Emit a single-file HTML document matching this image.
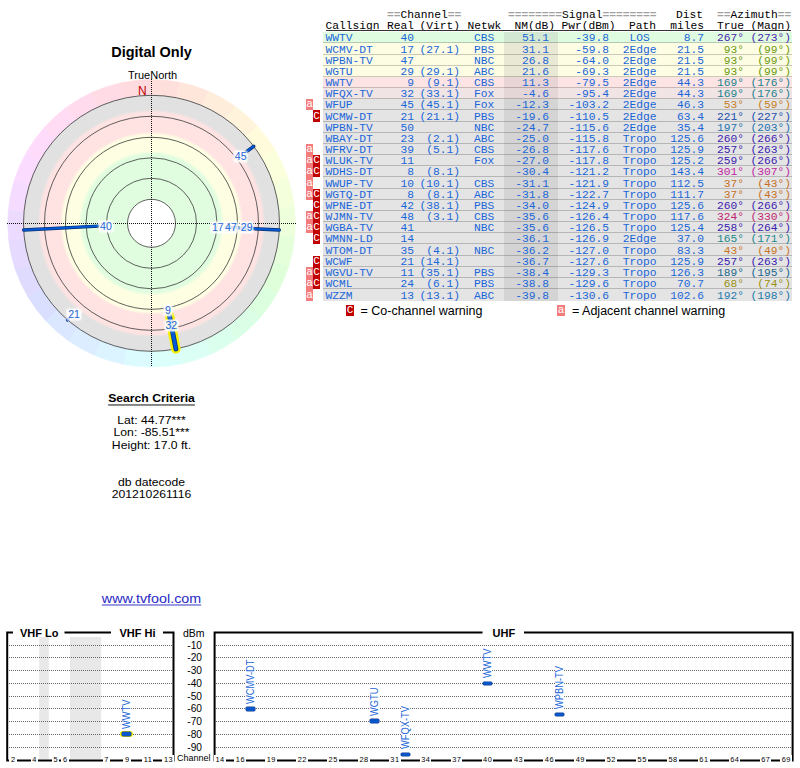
<!DOCTYPE html>
<html><head><meta charset='utf-8'><style>
*{margin:0;padding:0}
html,body{width:800px;height:768px;overflow:hidden;background:#fff}
div{position:absolute;white-space:nowrap}
.title{font:bold 14.5px 'Liberation Sans',sans-serif;text-align:center;color:#000}
.tn{font:11px 'Liberation Sans',sans-serif;color:#000}
.nn{font:12px 'Liberation Sans',sans-serif;color:#c00000}
.pl{font:10.5px 'Liberation Sans',sans-serif;color:#1a66d8;line-height:11px;padding:0 1px;background:rgba(255,255,255,0.85);border-radius:2px;box-shadow:0 0 1.5px 1px rgba(255,255,255,0.6)}
.mono{font-family:'Liberation Mono',monospace;font-size:11.25px;line-height:12px}
.hdr{color:#000}
.hdr .g{color:#a0a0a0;font-weight:bold}
.row{left:323px;width:469px;box-shadow:inset 0 -1px 0 rgba(0,0,0,0.2)}
.nmbg{left:181px;top:0;width:54px;height:100%;box-shadow:inset 0 -1px 0 rgba(0,0,0,0.2)}
.cell{color:#1a66d8}
.ba,.bc{font:11px 'Liberation Mono',monospace;color:#fff;text-align:center;line-height:11px;width:7px;height:11.18px;top:0}
.ba{left:306px;background:#f47c7c}
.bc{left:313px;background:#c00000}
.leg{font:12.5px 'Liberation Sans',sans-serif;color:#000}
.sc{left:0;width:303px;text-align:center;font:12.2px 'Liberation Sans',sans-serif;color:#000;transform:scaleY(0.93);text-underline-offset:2.5px}
.link{font:14.3px 'Liberation Sans',sans-serif;color:#2828c4;text-decoration:underline;text-align:center;transform:scaleY(0.93);text-underline-offset:1.5px}
.band{font:bold 11px 'Liberation Sans',sans-serif;color:#000;line-height:13px}
.dbm{font:10.5px 'Liberation Sans',sans-serif;color:#000;line-height:12px}
.dbl{left:170px;width:32px;text-align:right;font:10.2px 'Liberation Sans',sans-serif;color:#000;line-height:12px}
.chn{font:9px 'Liberation Sans',sans-serif;color:#000;line-height:12px}
.ch{width:30px;text-align:center;font:7.4px 'Liberation Sans',sans-serif;color:#000;line-height:12px;letter-spacing:0.5px}
.ch span{background:#fff;padding:0 1px 0 1.5px}
.vn{font:9.3px 'Liberation Sans',sans-serif;color:#1a66d8;background:#fff;padding:0 1px;transform-origin:0 0;transform:rotate(-90deg) scaleY(1.15);line-height:8px}
</style></head><body>
<svg style="position:absolute;left:0;top:0" width="310" height="380" viewBox="0 0 310 380">
<defs><radialGradient id="rg" cx="151.5" cy="223.3" r="128" gradientUnits="userSpaceOnUse">
<stop offset="0.0000" stop-color="#ffffff"/>
<stop offset="0.1867" stop-color="#ffffff"/>
<stop offset="0.1875" stop-color="#e0fde0"/>
<stop offset="0.5391" stop-color="#e0fde0"/>
<stop offset="0.5664" stop-color="#fefee2"/>
<stop offset="0.6914" stop-color="#fefee2"/>
<stop offset="0.7148" stop-color="#ffe3e3"/>
<stop offset="0.8633" stop-color="#ffe3e3"/>
<stop offset="0.8906" stop-color="#e1e1e1"/>
<stop offset="1.0000" stop-color="#e1e1e1"/>
</radialGradient></defs>
<path d="M149.99,79.51 A143.8,143.8 0 0 1 179.92,82.34 L176.70,98.32 A127.5,127.5 0 0 0 150.16,95.81Z" fill="hsl(6,100%,93%)" stroke="hsl(6,100%,93%)" stroke-width="0.6"/>
<path d="M179.92,82.34 A143.8,143.8 0 0 1 208.61,91.33 L202.14,106.29 A127.5,127.5 0 0 0 176.70,98.32Z" fill="hsl(18,100%,93%)" stroke="hsl(18,100%,93%)" stroke-width="0.6"/>
<path d="M208.61,91.33 A143.8,143.8 0 0 1 234.80,106.08 L225.36,119.37 A127.5,127.5 0 0 0 202.14,106.29Z" fill="hsl(30,100%,93%)" stroke="hsl(30,100%,93%)" stroke-width="0.6"/>
<path d="M234.80,106.08 A143.8,143.8 0 0 1 257.35,125.97 L245.35,137.00 A127.5,127.5 0 0 0 225.36,119.37Z" fill="hsl(42,100%,93%)" stroke="hsl(42,100%,93%)" stroke-width="0.6"/>
<path d="M257.35,125.97 A143.8,143.8 0 0 1 275.27,150.10 L261.24,158.40 A127.5,127.5 0 0 0 245.35,137.00Z" fill="hsl(54,100%,93%)" stroke="hsl(54,100%,93%)" stroke-width="0.6"/>
<path d="M275.27,150.10 A143.8,143.8 0 0 1 287.79,177.43 L272.34,182.63 A127.5,127.5 0 0 0 261.24,158.40Z" fill="hsl(66,100%,93%)" stroke="hsl(66,100%,93%)" stroke-width="0.6"/>
<path d="M287.79,177.43 A143.8,143.8 0 0 1 294.35,206.77 L278.16,208.65 A127.5,127.5 0 0 0 272.34,182.63Z" fill="hsl(78,100%,93%)" stroke="hsl(78,100%,93%)" stroke-width="0.6"/>
<path d="M294.35,206.77 A143.8,143.8 0 0 1 294.66,236.83 L278.43,235.30 A127.5,127.5 0 0 0 278.16,208.65Z" fill="hsl(90,100%,93%)" stroke="hsl(90,100%,93%)" stroke-width="0.6"/>
<path d="M294.66,236.83 A143.8,143.8 0 0 1 288.72,266.30 L273.17,261.43 A127.5,127.5 0 0 0 278.43,235.30Z" fill="hsl(102,100%,93%)" stroke="hsl(102,100%,93%)" stroke-width="0.6"/>
<path d="M288.72,266.30 A143.8,143.8 0 0 1 276.78,293.89 L262.58,285.89 A127.5,127.5 0 0 0 273.17,261.43Z" fill="hsl(114,100%,93%)" stroke="hsl(114,100%,93%)" stroke-width="0.6"/>
<path d="M276.78,293.89 A143.8,143.8 0 0 1 259.37,318.40 L247.14,307.62 A127.5,127.5 0 0 0 262.58,285.89Z" fill="hsl(126,100%,93%)" stroke="hsl(126,100%,93%)" stroke-width="0.6"/>
<path d="M259.37,318.40 A143.8,143.8 0 0 1 237.24,338.75 L227.52,325.66 A127.5,127.5 0 0 0 247.14,307.62Z" fill="hsl(138,100%,93%)" stroke="hsl(138,100%,93%)" stroke-width="0.6"/>
<path d="M237.24,338.75 A143.8,143.8 0 0 1 211.36,354.05 L204.58,339.23 A127.5,127.5 0 0 0 227.52,325.66Z" fill="hsl(150,100%,93%)" stroke="hsl(150,100%,93%)" stroke-width="0.6"/>
<path d="M211.36,354.05 A143.8,143.8 0 0 1 182.87,363.64 L179.31,347.73 A127.5,127.5 0 0 0 204.58,339.23Z" fill="hsl(162,100%,93%)" stroke="hsl(162,100%,93%)" stroke-width="0.6"/>
<path d="M182.87,363.64 A143.8,143.8 0 0 1 153.01,367.09 L152.84,350.79 A127.5,127.5 0 0 0 179.31,347.73Z" fill="hsl(174,100%,93%)" stroke="hsl(174,100%,93%)" stroke-width="0.6"/>
<path d="M153.01,367.09 A143.8,143.8 0 0 1 123.08,364.26 L126.30,348.28 A127.5,127.5 0 0 0 152.84,350.79Z" fill="hsl(186,100%,93%)" stroke="hsl(186,100%,93%)" stroke-width="0.6"/>
<path d="M123.08,364.26 A143.8,143.8 0 0 1 94.39,355.27 L100.86,340.31 A127.5,127.5 0 0 0 126.30,348.28Z" fill="hsl(198,100%,93%)" stroke="hsl(198,100%,93%)" stroke-width="0.6"/>
<path d="M94.39,355.27 A143.8,143.8 0 0 1 68.20,340.52 L77.64,327.23 A127.5,127.5 0 0 0 100.86,340.31Z" fill="hsl(210,100%,93%)" stroke="hsl(210,100%,93%)" stroke-width="0.6"/>
<path d="M68.20,340.52 A143.8,143.8 0 0 1 45.65,320.63 L57.65,309.60 A127.5,127.5 0 0 0 77.64,327.23Z" fill="hsl(222,100%,93%)" stroke="hsl(222,100%,93%)" stroke-width="0.6"/>
<path d="M45.65,320.63 A143.8,143.8 0 0 1 27.73,296.50 L41.76,288.20 A127.5,127.5 0 0 0 57.65,309.60Z" fill="hsl(234,100%,93%)" stroke="hsl(234,100%,93%)" stroke-width="0.6"/>
<path d="M27.73,296.50 A143.8,143.8 0 0 1 15.21,269.17 L30.66,263.97 A127.5,127.5 0 0 0 41.76,288.20Z" fill="hsl(246,100%,93%)" stroke="hsl(246,100%,93%)" stroke-width="0.6"/>
<path d="M15.21,269.17 A143.8,143.8 0 0 1 8.65,239.83 L24.84,237.95 A127.5,127.5 0 0 0 30.66,263.97Z" fill="hsl(258,100%,93%)" stroke="hsl(258,100%,93%)" stroke-width="0.6"/>
<path d="M8.65,239.83 A143.8,143.8 0 0 1 8.34,209.77 L24.57,211.30 A127.5,127.5 0 0 0 24.84,237.95Z" fill="hsl(270,100%,93%)" stroke="hsl(270,100%,93%)" stroke-width="0.6"/>
<path d="M8.34,209.77 A143.8,143.8 0 0 1 14.28,180.30 L29.83,185.17 A127.5,127.5 0 0 0 24.57,211.30Z" fill="hsl(282,100%,93%)" stroke="hsl(282,100%,93%)" stroke-width="0.6"/>
<path d="M14.28,180.30 A143.8,143.8 0 0 1 26.22,152.71 L40.42,160.71 A127.5,127.5 0 0 0 29.83,185.17Z" fill="hsl(294,100%,93%)" stroke="hsl(294,100%,93%)" stroke-width="0.6"/>
<path d="M26.22,152.71 A143.8,143.8 0 0 1 43.63,128.20 L55.86,138.98 A127.5,127.5 0 0 0 40.42,160.71Z" fill="hsl(306,100%,93%)" stroke="hsl(306,100%,93%)" stroke-width="0.6"/>
<path d="M43.63,128.20 A143.8,143.8 0 0 1 65.76,107.85 L75.48,120.94 A127.5,127.5 0 0 0 55.86,138.98Z" fill="hsl(318,100%,93%)" stroke="hsl(318,100%,93%)" stroke-width="0.6"/>
<path d="M65.76,107.85 A143.8,143.8 0 0 1 91.64,92.55 L98.42,107.37 A127.5,127.5 0 0 0 75.48,120.94Z" fill="hsl(330,100%,93%)" stroke="hsl(330,100%,93%)" stroke-width="0.6"/>
<path d="M91.64,92.55 A143.8,143.8 0 0 1 120.13,82.96 L123.69,98.87 A127.5,127.5 0 0 0 98.42,107.37Z" fill="hsl(342,100%,93%)" stroke="hsl(342,100%,93%)" stroke-width="0.6"/>
<path d="M120.13,82.96 A143.8,143.8 0 0 1 149.99,79.51 L150.16,95.81 A127.5,127.5 0 0 0 123.69,98.87Z" fill="hsl(354,100%,93%)" stroke="hsl(354,100%,93%)" stroke-width="0.6"/>
<circle cx="151.5" cy="223.3" r="128" fill="url(#rg)"/>
<circle cx="151.5" cy="223.3" r="24" fill="none" stroke="#3a3a3a" stroke-width="0.8"/>
<circle cx="151.5" cy="223.3" r="45" fill="none" stroke="#3a3a3a" stroke-width="0.8"/>
<circle cx="151.5" cy="223.3" r="65.5" fill="none" stroke="#3a3a3a" stroke-width="0.8"/>
<circle cx="151.5" cy="223.3" r="86" fill="none" stroke="#3a3a3a" stroke-width="0.8"/>
<circle cx="151.5" cy="223.3" r="107" fill="none" stroke="#3a3a3a" stroke-width="0.8"/>
<circle cx="151.5" cy="223.3" r="128" fill="none" stroke="#3a3a3a" stroke-width="0.8"/>
<line x1="7" y1="223.5" x2="296" y2="223.5" stroke="#111" stroke-width="1" stroke-dasharray="1,1"/>
<line x1="151.5" y1="79" x2="151.5" y2="367" stroke="#111" stroke-width="1" stroke-dasharray="1,1"/>
<line x1="98.52" y1="226.08" x2="23.68" y2="230.00" stroke="#0a3070" stroke-width="3.4" stroke-linecap="round"/>
<line x1="98.52" y1="226.08" x2="23.68" y2="230.00" stroke="#0058d8" stroke-width="2.0" stroke-linecap="round"/>
<line x1="225.25" y1="227.17" x2="279.32" y2="230.00" stroke="#0a3070" stroke-width="3.4" stroke-linecap="round"/>
<line x1="225.25" y1="227.17" x2="279.32" y2="230.00" stroke="#0058d8" stroke-width="2.0" stroke-linecap="round"/>
<line x1="246.53" y1="151.69" x2="253.73" y2="146.27" stroke="#0a3070" stroke-width="3.4" stroke-linecap="round"/>
<line x1="246.53" y1="151.69" x2="253.73" y2="146.27" stroke="#0058d8" stroke-width="2.0" stroke-linecap="round"/>
<line x1="68.45" y1="318.83" x2="67.52" y2="319.90" stroke="#0a3070" stroke-width="3.4" stroke-linecap="round"/>
<line x1="68.45" y1="318.83" x2="67.52" y2="319.90" stroke="#0058d8" stroke-width="2.0" stroke-linecap="round"/>
<line x1="169.52" y1="316.01" x2="175.92" y2="348.95" stroke="#f4f000" stroke-width="9.5" stroke-linecap="round"/>
<line x1="169.52" y1="316.01" x2="175.92" y2="348.95" stroke="#0a3070" stroke-width="4.8" stroke-linecap="round"/>
<line x1="169.52" y1="316.01" x2="175.92" y2="348.95" stroke="#0058d8" stroke-width="3.4" stroke-linecap="round"/>
</svg>
<div class="pl" style="left:99.1px;top:221.0px">40</div>
<div class="pl" style="left:211.0px;top:222.2px">17</div>
<div class="pl" style="left:224.1px;top:222.2px">47</div>
<div class="pl" style="left:239.8px;top:222.2px">29</div>
<div class="pl" style="left:233.8px;top:151.3px">45</div>
<div class="pl" style="left:164.0px;top:304.5px">9</div>
<div class="pl" style="left:164.5px;top:319.9px">32</div>
<div class="pl" style="left:67.2px;top:308.8px">21</div>
<div class="title" style="left:0;top:43.5px;width:303px">Digital Only</div>
<div class="tn" style="left:128px;top:68.5px">TrueNorth</div>
<div class="nn" style="left:138px;top:84px">N</div>
<div class="mono hdr" style="left:387px;top:9.2px"><span class="g">==</span>Channel<span class="g">==</span></div>
<div class="mono hdr" style="left:508px;top:9.2px"><span class="g">========</span>Signal<span class="g">========</span></div>
<div class="mono hdr r" style="right:97px;top:9.2px">Dist</div>
<div class="mono hdr" style="left:717px;top:9.2px"><span class="g">==</span>Azimuth<span class="g">==</span></div>
<div class="mono hdr" style="left:325.5px;top:20px">Callsign</div>
<div class="mono hdr" style="right:386.0px;top:20px">Real</div>
<div class="mono hdr" style="right:340.0px;top:20px">(Virt)</div>
<div class="mono hdr" style="left:467.5px;top:20px">Netwk</div>
<div class="mono hdr" style="right:245.0px;top:20px">NM(dB)</div>
<div class="mono hdr" style="right:184.5px;top:20px">Pwr(dBm)</div>
<div class="mono hdr" style="right:144.0px;top:20px">Path</div>
<div class="mono hdr" style="right:96.0px;top:20px">miles</div>
<div class="mono hdr" style="right:56.0px;top:20px">True</div>
<div class="mono hdr" style="right:9.0px;top:20px">(Magn)</div>
<div style="position:absolute;left:326px;top:30px;width:465px;height:1px;background:#333"></div>
<div class="row" style="top:32px;height:11px;background:#e0fce0"><div class="nmbg" style="background:#d2e8d2"></div></div>
<div class="mono cell" style="top:32.00px;left:325.5px">WWTV</div>
<div class="mono cell" style="top:32.00px;right:386.0px">40</div>
<div class="mono cell" style="top:32.00px;left:474.0px">CBS</div>
<div class="mono cell" style="top:32.00px;right:251.0px">51.1</div>
<div class="mono cell" style="top:32.00px;right:191.0px">-39.8</div>
<div class="mono cell" style="top:32.00px;left:599.6px;width:80px;text-align:center">LOS</div>
<div class="mono cell" style="top:32.00px;right:96.0px">8.7</div>
<div class="mono cell" style="top:32.00px;color:hsl(258,72%,40%);right:56.0px">267&deg;</div>
<div class="mono cell" style="top:32.00px;color:hsl(258,72%,40%);right:9.0px">(273&deg;)</div>
<div class="row" style="top:43px;height:12px;background:#fdfde4"><div class="nmbg" style="background:#e8e8d4"></div></div>
<div class="mono cell" style="top:44.00px;left:325.5px">WCMV-DT</div>
<div class="mono cell" style="top:44.00px;right:386.0px">17</div>
<div class="mono cell" style="top:44.00px;right:340.0px">(27.1)</div>
<div class="mono cell" style="top:44.00px;left:474.0px">PBS</div>
<div class="mono cell" style="top:44.00px;right:251.0px">31.1</div>
<div class="mono cell" style="top:44.00px;right:191.0px">-59.8</div>
<div class="mono cell" style="top:44.00px;left:599.6px;width:80px;text-align:center">2Edge</div>
<div class="mono cell" style="top:44.00px;right:96.0px">21.5</div>
<div class="mono cell" style="top:44.00px;color:hsl(80,82%,33%);right:56.0px">93&deg;</div>
<div class="mono cell" style="top:44.00px;color:hsl(80,82%,33%);right:9.0px">(99&deg;)</div>
<div class="row" style="top:55px;height:11px;background:#fdfde4"><div class="nmbg" style="background:#e8e8d4"></div></div>
<div class="mono cell" style="top:55.00px;left:325.5px">WPBN-TV</div>
<div class="mono cell" style="top:55.00px;right:386.0px">47</div>
<div class="mono cell" style="top:55.00px;left:474.0px">NBC</div>
<div class="mono cell" style="top:55.00px;right:251.0px">26.8</div>
<div class="mono cell" style="top:55.00px;right:191.0px">-64.0</div>
<div class="mono cell" style="top:55.00px;left:599.6px;width:80px;text-align:center">2Edge</div>
<div class="mono cell" style="top:55.00px;right:96.0px">21.5</div>
<div class="mono cell" style="top:55.00px;color:hsl(80,82%,33%);right:56.0px">93&deg;</div>
<div class="mono cell" style="top:55.00px;color:hsl(80,82%,33%);right:9.0px">(99&deg;)</div>
<div class="row" style="top:66px;height:11px;background:#fdfde4"><div class="nmbg" style="background:#e8e8d4"></div></div>
<div class="mono cell" style="top:66.00px;left:325.5px">WGTU</div>
<div class="mono cell" style="top:66.00px;right:386.0px">29</div>
<div class="mono cell" style="top:66.00px;right:340.0px">(29.1)</div>
<div class="mono cell" style="top:66.00px;left:474.0px">ABC</div>
<div class="mono cell" style="top:66.00px;right:251.0px">21.6</div>
<div class="mono cell" style="top:66.00px;right:191.0px">-69.3</div>
<div class="mono cell" style="top:66.00px;left:599.6px;width:80px;text-align:center">2Edge</div>
<div class="mono cell" style="top:66.00px;right:96.0px">21.5</div>
<div class="mono cell" style="top:66.00px;color:hsl(80,82%,33%);right:56.0px">93&deg;</div>
<div class="mono cell" style="top:66.00px;color:hsl(80,82%,33%);right:9.0px">(99&deg;)</div>
<div class="row" style="top:77px;height:11px;background:#fce4e4"><div class="nmbg" style="background:#e8d4d4"></div></div>
<div class="mono cell" style="top:77.00px;left:325.5px">WWTV</div>
<div class="mono cell" style="top:77.00px;right:386.0px">9</div>
<div class="mono cell" style="top:77.00px;right:340.0px">(9.1)</div>
<div class="mono cell" style="top:77.00px;left:474.0px">CBS</div>
<div class="mono cell" style="top:77.00px;right:251.0px">11.3</div>
<div class="mono cell" style="top:77.00px;right:191.0px">-79.5</div>
<div class="mono cell" style="top:77.00px;left:599.6px;width:80px;text-align:center">2Edge</div>
<div class="mono cell" style="top:77.00px;right:96.0px">44.3</div>
<div class="mono cell" style="top:77.00px;color:hsl(186,68%,33%);right:56.0px">169&deg;</div>
<div class="mono cell" style="top:77.00px;color:hsl(186,68%,33%);right:9.0px">(176&deg;)</div>
<div class="row" style="top:88px;height:11px;background:#f0e4e4"><div class="nmbg" style="background:#e4d6d6"></div></div>
<div class="mono cell" style="top:88.00px;left:325.5px">WFQX-TV</div>
<div class="mono cell" style="top:88.00px;right:386.0px">32</div>
<div class="mono cell" style="top:88.00px;right:340.0px">(33.1)</div>
<div class="mono cell" style="top:88.00px;left:474.0px">Fox</div>
<div class="mono cell" style="top:88.00px;right:251.0px">-4.6</div>
<div class="mono cell" style="top:88.00px;right:191.0px">-95.4</div>
<div class="mono cell" style="top:88.00px;left:599.6px;width:80px;text-align:center">2Edge</div>
<div class="mono cell" style="top:88.00px;right:96.0px">44.3</div>
<div class="mono cell" style="top:88.00px;color:hsl(186,68%,33%);right:56.0px">169&deg;</div>
<div class="mono cell" style="top:88.00px;color:hsl(186,68%,33%);right:9.0px">(176&deg;)</div>
<div class="row" style="top:99px;height:11px;background:#e4e4e4"><div class="nmbg" style="background:#d4d4d4"></div></div>
<div class="ba" style="top:99px;height:11px;line-height:11px">a</div>
<div class="mono cell" style="top:99.00px;left:325.5px">WFUP</div>
<div class="mono cell" style="top:99.00px;right:386.0px">45</div>
<div class="mono cell" style="top:99.00px;right:340.0px">(45.1)</div>
<div class="mono cell" style="top:99.00px;left:474.0px">Fox</div>
<div class="mono cell" style="top:99.00px;right:251.0px">-12.3</div>
<div class="mono cell" style="top:99.00px;right:191.0px">-103.2</div>
<div class="mono cell" style="top:99.00px;left:599.6px;width:80px;text-align:center">2Edge</div>
<div class="mono cell" style="top:99.00px;right:96.0px">46.3</div>
<div class="mono cell" style="top:99.00px;color:hsl(34,70%,46%);right:56.0px">53&deg;</div>
<div class="mono cell" style="top:99.00px;color:hsl(34,70%,46%);right:9.0px">(59&deg;)</div>
<div class="row" style="top:110px;height:12px;background:#e4e4e4"><div class="nmbg" style="background:#d4d4d4"></div></div>
<div class="bc" style="top:110px;height:12px;line-height:12px">C</div>
<div class="mono cell" style="top:111.00px;left:325.5px">WCMW-DT</div>
<div class="mono cell" style="top:111.00px;right:386.0px">21</div>
<div class="mono cell" style="top:111.00px;right:340.0px">(21.1)</div>
<div class="mono cell" style="top:111.00px;left:474.0px">PBS</div>
<div class="mono cell" style="top:111.00px;right:251.0px">-19.6</div>
<div class="mono cell" style="top:111.00px;right:191.0px">-110.5</div>
<div class="mono cell" style="top:111.00px;left:599.6px;width:80px;text-align:center">2Edge</div>
<div class="mono cell" style="top:111.00px;right:96.0px">63.4</div>
<div class="mono cell" style="top:111.00px;color:hsl(220,72%,40%);right:56.0px">221&deg;</div>
<div class="mono cell" style="top:111.00px;color:hsl(220,72%,40%);right:9.0px">(227&deg;)</div>
<div class="row" style="top:122px;height:11px;background:#e4e4e4"><div class="nmbg" style="background:#d4d4d4"></div></div>
<div class="mono cell" style="top:122.00px;left:325.5px">WPBN-TV</div>
<div class="mono cell" style="top:122.00px;right:386.0px">50</div>
<div class="mono cell" style="top:122.00px;left:474.0px">NBC</div>
<div class="mono cell" style="top:122.00px;right:251.0px">-24.7</div>
<div class="mono cell" style="top:122.00px;right:191.0px">-115.6</div>
<div class="mono cell" style="top:122.00px;left:599.6px;width:80px;text-align:center">2Edge</div>
<div class="mono cell" style="top:122.00px;right:96.0px">35.4</div>
<div class="mono cell" style="top:122.00px;color:hsl(205,72%,40%);right:56.0px">197&deg;</div>
<div class="mono cell" style="top:122.00px;color:hsl(205,72%,40%);right:9.0px">(203&deg;)</div>
<div class="row" style="top:133px;height:11px;background:#e4e4e4"><div class="nmbg" style="background:#d4d4d4"></div></div>
<div class="mono cell" style="top:133.00px;left:325.5px">WBAY-DT</div>
<div class="mono cell" style="top:133.00px;right:386.0px">23</div>
<div class="mono cell" style="top:133.00px;right:340.0px">(2.1)</div>
<div class="mono cell" style="top:133.00px;left:474.0px">ABC</div>
<div class="mono cell" style="top:133.00px;right:251.0px">-25.0</div>
<div class="mono cell" style="top:133.00px;right:191.0px">-115.8</div>
<div class="mono cell" style="top:133.00px;left:599.6px;width:80px;text-align:center">Tropo</div>
<div class="mono cell" style="top:133.00px;right:96.0px">125.6</div>
<div class="mono cell" style="top:133.00px;color:hsl(254,72%,40%);right:56.0px">260&deg;</div>
<div class="mono cell" style="top:133.00px;color:hsl(254,72%,40%);right:9.0px">(266&deg;)</div>
<div class="row" style="top:144px;height:11px;background:#e4e4e4"><div class="nmbg" style="background:#d4d4d4"></div></div>
<div class="ba" style="top:144px;height:11px;line-height:11px">a</div>
<div class="mono cell" style="top:144.00px;left:325.5px">WFRV-DT</div>
<div class="mono cell" style="top:144.00px;right:386.0px">39</div>
<div class="mono cell" style="top:144.00px;right:340.0px">(5.1)</div>
<div class="mono cell" style="top:144.00px;left:474.0px">CBS</div>
<div class="mono cell" style="top:144.00px;right:251.0px">-26.8</div>
<div class="mono cell" style="top:144.00px;right:191.0px">-117.6</div>
<div class="mono cell" style="top:144.00px;left:599.6px;width:80px;text-align:center">Tropo</div>
<div class="mono cell" style="top:144.00px;right:96.0px">125.9</div>
<div class="mono cell" style="top:144.00px;color:hsl(252,72%,40%);right:56.0px">257&deg;</div>
<div class="mono cell" style="top:144.00px;color:hsl(252,72%,40%);right:9.0px">(263&deg;)</div>
<div class="row" style="top:155px;height:11px;background:#e4e4e4"><div class="nmbg" style="background:#d4d4d4"></div></div>
<div class="ba" style="top:155px;height:11px;line-height:11px">a</div>
<div class="bc" style="top:155px;height:11px;line-height:11px">C</div>
<div class="mono cell" style="top:155.00px;left:325.5px">WLUK-TV</div>
<div class="mono cell" style="top:155.00px;right:386.0px">11</div>
<div class="mono cell" style="top:155.00px;left:474.0px">Fox</div>
<div class="mono cell" style="top:155.00px;right:251.0px">-27.0</div>
<div class="mono cell" style="top:155.00px;right:191.0px">-117.8</div>
<div class="mono cell" style="top:155.00px;left:599.6px;width:80px;text-align:center">Tropo</div>
<div class="mono cell" style="top:155.00px;right:96.0px">125.2</div>
<div class="mono cell" style="top:155.00px;color:hsl(253,72%,40%);right:56.0px">259&deg;</div>
<div class="mono cell" style="top:155.00px;color:hsl(253,72%,40%);right:9.0px">(266&deg;)</div>
<div class="row" style="top:166px;height:11px;background:#e4e4e4"><div class="nmbg" style="background:#d4d4d4"></div></div>
<div class="ba" style="top:166px;height:11px;line-height:11px">a</div>
<div class="bc" style="top:166px;height:11px;line-height:11px">C</div>
<div class="mono cell" style="top:166.00px;left:325.5px">WDHS-DT</div>
<div class="mono cell" style="top:166.00px;right:386.0px">8</div>
<div class="mono cell" style="top:166.00px;right:340.0px">(8.1)</div>
<div class="mono cell" style="top:166.00px;right:251.0px">-30.4</div>
<div class="mono cell" style="top:166.00px;right:191.0px">-121.2</div>
<div class="mono cell" style="top:166.00px;left:599.6px;width:80px;text-align:center">Tropo</div>
<div class="mono cell" style="top:166.00px;right:96.0px">143.4</div>
<div class="mono cell" style="top:166.00px;color:hsl(312,72%,44%);right:56.0px">301&deg;</div>
<div class="mono cell" style="top:166.00px;color:hsl(312,72%,44%);right:9.0px">(307&deg;)</div>
<div class="row" style="top:177px;height:12px;background:#e4e4e4"><div class="nmbg" style="background:#d4d4d4"></div></div>
<div class="ba" style="top:177px;height:12px;line-height:12px">a</div>
<div class="mono cell" style="top:178.00px;left:325.5px">WWUP-TV</div>
<div class="mono cell" style="top:178.00px;right:386.0px">10</div>
<div class="mono cell" style="top:178.00px;right:340.0px">(10.1)</div>
<div class="mono cell" style="top:178.00px;left:474.0px">CBS</div>
<div class="mono cell" style="top:178.00px;right:251.0px">-31.1</div>
<div class="mono cell" style="top:178.00px;right:191.0px">-121.9</div>
<div class="mono cell" style="top:178.00px;left:599.6px;width:80px;text-align:center">Tropo</div>
<div class="mono cell" style="top:178.00px;right:96.0px">112.5</div>
<div class="mono cell" style="top:178.00px;color:hsl(28,70%,46%);right:56.0px">37&deg;</div>
<div class="mono cell" style="top:178.00px;color:hsl(28,70%,46%);right:9.0px">(43&deg;)</div>
<div class="row" style="top:189px;height:11px;background:#e4e4e4"><div class="nmbg" style="background:#d4d4d4"></div></div>
<div class="ba" style="top:189px;height:11px;line-height:11px">a</div>
<div class="bc" style="top:189px;height:11px;line-height:11px">C</div>
<div class="mono cell" style="top:189.00px;left:325.5px">WGTQ-DT</div>
<div class="mono cell" style="top:189.00px;right:386.0px">8</div>
<div class="mono cell" style="top:189.00px;right:340.0px">(8.1)</div>
<div class="mono cell" style="top:189.00px;left:474.0px">ABC</div>
<div class="mono cell" style="top:189.00px;right:251.0px">-31.8</div>
<div class="mono cell" style="top:189.00px;right:191.0px">-122.7</div>
<div class="mono cell" style="top:189.00px;left:599.6px;width:80px;text-align:center">Tropo</div>
<div class="mono cell" style="top:189.00px;right:96.0px">111.7</div>
<div class="mono cell" style="top:189.00px;color:hsl(28,70%,46%);right:56.0px">37&deg;</div>
<div class="mono cell" style="top:189.00px;color:hsl(28,70%,46%);right:9.0px">(43&deg;)</div>
<div class="row" style="top:200px;height:11px;background:#e4e4e4"><div class="nmbg" style="background:#d4d4d4"></div></div>
<div class="bc" style="top:200px;height:11px;line-height:11px">C</div>
<div class="mono cell" style="top:200.00px;left:325.5px">WPNE-DT</div>
<div class="mono cell" style="top:200.00px;right:386.0px">42</div>
<div class="mono cell" style="top:200.00px;right:340.0px">(38.1)</div>
<div class="mono cell" style="top:200.00px;left:474.0px">PBS</div>
<div class="mono cell" style="top:200.00px;right:251.0px">-34.0</div>
<div class="mono cell" style="top:200.00px;right:191.0px">-124.9</div>
<div class="mono cell" style="top:200.00px;left:599.6px;width:80px;text-align:center">Tropo</div>
<div class="mono cell" style="top:200.00px;right:96.0px">125.6</div>
<div class="mono cell" style="top:200.00px;color:hsl(254,72%,40%);right:56.0px">260&deg;</div>
<div class="mono cell" style="top:200.00px;color:hsl(254,72%,40%);right:9.0px">(266&deg;)</div>
<div class="row" style="top:211px;height:11px;background:#e4e4e4"><div class="nmbg" style="background:#d4d4d4"></div></div>
<div class="ba" style="top:211px;height:11px;line-height:11px">a</div>
<div class="bc" style="top:211px;height:11px;line-height:11px">C</div>
<div class="mono cell" style="top:211.00px;left:325.5px">WJMN-TV</div>
<div class="mono cell" style="top:211.00px;right:386.0px">48</div>
<div class="mono cell" style="top:211.00px;right:340.0px">(3.1)</div>
<div class="mono cell" style="top:211.00px;left:474.0px">CBS</div>
<div class="mono cell" style="top:211.00px;right:251.0px">-35.6</div>
<div class="mono cell" style="top:211.00px;right:191.0px">-126.4</div>
<div class="mono cell" style="top:211.00px;left:599.6px;width:80px;text-align:center">Tropo</div>
<div class="mono cell" style="top:211.00px;right:96.0px">117.6</div>
<div class="mono cell" style="top:211.00px;color:hsl(330,72%,44%);right:56.0px">324&deg;</div>
<div class="mono cell" style="top:211.00px;color:hsl(330,72%,44%);right:9.0px">(330&deg;)</div>
<div class="row" style="top:222px;height:11px;background:#e4e4e4"><div class="nmbg" style="background:#d4d4d4"></div></div>
<div class="ba" style="top:222px;height:11px;line-height:11px">a</div>
<div class="bc" style="top:222px;height:11px;line-height:11px">C</div>
<div class="mono cell" style="top:222.00px;left:325.5px">WGBA-TV</div>
<div class="mono cell" style="top:222.00px;right:386.0px">41</div>
<div class="mono cell" style="top:222.00px;left:474.0px">NBC</div>
<div class="mono cell" style="top:222.00px;right:251.0px">-35.6</div>
<div class="mono cell" style="top:222.00px;right:191.0px">-126.5</div>
<div class="mono cell" style="top:222.00px;left:599.6px;width:80px;text-align:center">Tropo</div>
<div class="mono cell" style="top:222.00px;right:96.0px">125.4</div>
<div class="mono cell" style="top:222.00px;color:hsl(253,72%,40%);right:56.0px">258&deg;</div>
<div class="mono cell" style="top:222.00px;color:hsl(253,72%,40%);right:9.0px">(264&deg;)</div>
<div class="row" style="top:233px;height:11px;background:#e4e4e4"><div class="nmbg" style="background:#d4d4d4"></div></div>
<div class="bc" style="top:233px;height:11px;line-height:11px">C</div>
<div class="mono cell" style="top:233.00px;left:325.5px">WMNN-LD</div>
<div class="mono cell" style="top:233.00px;right:386.0px">14</div>
<div class="mono cell" style="top:233.00px;right:251.0px">-36.1</div>
<div class="mono cell" style="top:233.00px;right:191.0px">-126.9</div>
<div class="mono cell" style="top:233.00px;left:599.6px;width:80px;text-align:center">2Edge</div>
<div class="mono cell" style="top:233.00px;right:96.0px">37.0</div>
<div class="mono cell" style="top:233.00px;color:hsl(183,68%,33%);right:56.0px">165&deg;</div>
<div class="mono cell" style="top:233.00px;color:hsl(183,68%,33%);right:9.0px">(171&deg;)</div>
<div class="row" style="top:244px;height:12px;background:#e4e4e4"><div class="nmbg" style="background:#d4d4d4"></div></div>
<div class="mono cell" style="top:245.00px;left:325.5px">WTOM-DT</div>
<div class="mono cell" style="top:245.00px;right:386.0px">35</div>
<div class="mono cell" style="top:245.00px;right:340.0px">(4.1)</div>
<div class="mono cell" style="top:245.00px;left:474.0px">NBC</div>
<div class="mono cell" style="top:245.00px;right:251.0px">-36.2</div>
<div class="mono cell" style="top:245.00px;right:191.0px">-127.0</div>
<div class="mono cell" style="top:245.00px;left:599.6px;width:80px;text-align:center">Tropo</div>
<div class="mono cell" style="top:245.00px;right:96.0px">83.3</div>
<div class="mono cell" style="top:245.00px;color:hsl(30,70%,46%);right:56.0px">43&deg;</div>
<div class="mono cell" style="top:245.00px;color:hsl(30,70%,46%);right:9.0px">(49&deg;)</div>
<div class="row" style="top:256px;height:11px;background:#e4e4e4"><div class="nmbg" style="background:#d4d4d4"></div></div>
<div class="bc" style="top:256px;height:11px;line-height:11px">C</div>
<div class="mono cell" style="top:256.00px;left:325.5px">WCWF</div>
<div class="mono cell" style="top:256.00px;right:386.0px">21</div>
<div class="mono cell" style="top:256.00px;right:340.0px">(14.1)</div>
<div class="mono cell" style="top:256.00px;right:251.0px">-36.7</div>
<div class="mono cell" style="top:256.00px;right:191.0px">-127.6</div>
<div class="mono cell" style="top:256.00px;left:599.6px;width:80px;text-align:center">Tropo</div>
<div class="mono cell" style="top:256.00px;right:96.0px">125.9</div>
<div class="mono cell" style="top:256.00px;color:hsl(252,72%,40%);right:56.0px">257&deg;</div>
<div class="mono cell" style="top:256.00px;color:hsl(252,72%,40%);right:9.0px">(263&deg;)</div>
<div class="row" style="top:267px;height:11px;background:#e4e4e4"><div class="nmbg" style="background:#d4d4d4"></div></div>
<div class="ba" style="top:267px;height:11px;line-height:11px">a</div>
<div class="bc" style="top:267px;height:11px;line-height:11px">C</div>
<div class="mono cell" style="top:267.00px;left:325.5px">WGVU-TV</div>
<div class="mono cell" style="top:267.00px;right:386.0px">11</div>
<div class="mono cell" style="top:267.00px;right:340.0px">(35.1)</div>
<div class="mono cell" style="top:267.00px;left:474.0px">PBS</div>
<div class="mono cell" style="top:267.00px;right:251.0px">-38.4</div>
<div class="mono cell" style="top:267.00px;right:191.0px">-129.3</div>
<div class="mono cell" style="top:267.00px;left:599.6px;width:80px;text-align:center">Tropo</div>
<div class="mono cell" style="top:267.00px;right:96.0px">126.3</div>
<div class="mono cell" style="top:267.00px;color:hsl(200,68%,33%);right:56.0px">189&deg;</div>
<div class="mono cell" style="top:267.00px;color:hsl(200,68%,33%);right:9.0px">(195&deg;)</div>
<div class="row" style="top:278px;height:11px;background:#e4e4e4"><div class="nmbg" style="background:#d4d4d4"></div></div>
<div class="ba" style="top:278px;height:11px;line-height:11px">a</div>
<div class="bc" style="top:278px;height:11px;line-height:11px">C</div>
<div class="mono cell" style="top:278.00px;left:325.5px">WCML</div>
<div class="mono cell" style="top:278.00px;right:386.0px">24</div>
<div class="mono cell" style="top:278.00px;right:340.0px">(6.1)</div>
<div class="mono cell" style="top:278.00px;left:474.0px">PBS</div>
<div class="mono cell" style="top:278.00px;right:251.0px">-38.8</div>
<div class="mono cell" style="top:278.00px;right:191.0px">-129.6</div>
<div class="mono cell" style="top:278.00px;left:599.6px;width:80px;text-align:center">Tropo</div>
<div class="mono cell" style="top:278.00px;right:96.0px">70.7</div>
<div class="mono cell" style="top:278.00px;color:hsl(56,82%,33%);right:56.0px">68&deg;</div>
<div class="mono cell" style="top:278.00px;color:hsl(56,82%,33%);right:9.0px">(74&deg;)</div>
<div class="row" style="top:289px;height:12px;background:#e4e4e4;box-shadow:none"><div class="nmbg" style="background:#d4d4d4;box-shadow:none"></div></div>
<div class="ba" style="top:289px;height:12px;line-height:12px">a</div>
<div class="mono cell" style="top:290.30px;left:325.5px">WZZM</div>
<div class="mono cell" style="top:290.30px;right:386.0px">13</div>
<div class="mono cell" style="top:290.30px;right:340.0px">(13.1)</div>
<div class="mono cell" style="top:290.30px;left:474.0px">ABC</div>
<div class="mono cell" style="top:290.30px;right:251.0px">-39.8</div>
<div class="mono cell" style="top:290.30px;right:191.0px">-130.6</div>
<div class="mono cell" style="top:290.30px;left:599.6px;width:80px;text-align:center">Tropo</div>
<div class="mono cell" style="top:290.30px;right:96.0px">102.6</div>
<div class="mono cell" style="top:290.30px;color:hsl(202,72%,40%);right:56.0px">192&deg;</div>
<div class="mono cell" style="top:290.30px;color:hsl(202,72%,40%);right:9.0px">(198&deg;)</div>
<div class="bc" style="left:346px;top:305px;width:8px;height:11px">C</div>
<div class="leg" style="left:360.5px;top:304px">= Co-channel warning</div>
<div class="ba" style="left:557px;top:305px;width:8px;height:11px">a</div>
<div class="leg" style="left:572px;top:304px">= Adjacent channel warning</div>
<div class="sc" style="top:390.5px;font-weight:bold;text-decoration:underline">Search Criteria</div>
<div class="sc" style="top:412.5px">Lat: 44.77***</div>
<div class="sc" style="top:425.3px">Lon: -85.51***</div>
<div class="sc" style="top:437.5px">Height: 17.0 ft.</div>
<div class="sc" style="top:474.8px">db datecode</div>
<div class="sc" style="top:486.8px">201210261116</div>
<div class="link" style="left:0;width:303px;top:589.8px">www.tvfool.com</div>
<svg style="position:absolute;left:0;top:600px" width="800" height="168" viewBox="0 600 800 168">
<rect x="39.2" y="637" width="9.6" height="122" fill="#e8e8e8"/>
<rect x="70" y="637" width="31.2" height="122" fill="#e8e8e8"/>
<line x1="9" y1="645.50" x2="172" y2="645.50" stroke="#666" stroke-width="1" stroke-dasharray="1,1"/>
<line x1="216" y1="645.50" x2="792" y2="645.50" stroke="#666" stroke-width="1" stroke-dasharray="1,1"/>
<line x1="9" y1="657.50" x2="172" y2="657.50" stroke="#666" stroke-width="1" stroke-dasharray="1,1"/>
<line x1="216" y1="657.50" x2="792" y2="657.50" stroke="#666" stroke-width="1" stroke-dasharray="1,1"/>
<line x1="9" y1="670.50" x2="172" y2="670.50" stroke="#666" stroke-width="1" stroke-dasharray="1,1"/>
<line x1="216" y1="670.50" x2="792" y2="670.50" stroke="#666" stroke-width="1" stroke-dasharray="1,1"/>
<line x1="9" y1="683.50" x2="172" y2="683.50" stroke="#666" stroke-width="1" stroke-dasharray="1,1"/>
<line x1="216" y1="683.50" x2="792" y2="683.50" stroke="#666" stroke-width="1" stroke-dasharray="1,1"/>
<line x1="9" y1="696.50" x2="172" y2="696.50" stroke="#666" stroke-width="1" stroke-dasharray="1,1"/>
<line x1="216" y1="696.50" x2="792" y2="696.50" stroke="#666" stroke-width="1" stroke-dasharray="1,1"/>
<line x1="9" y1="708.50" x2="172" y2="708.50" stroke="#666" stroke-width="1" stroke-dasharray="1,1"/>
<line x1="216" y1="708.50" x2="792" y2="708.50" stroke="#666" stroke-width="1" stroke-dasharray="1,1"/>
<line x1="9" y1="721.50" x2="172" y2="721.50" stroke="#666" stroke-width="1" stroke-dasharray="1,1"/>
<line x1="216" y1="721.50" x2="792" y2="721.50" stroke="#666" stroke-width="1" stroke-dasharray="1,1"/>
<line x1="9" y1="734.50" x2="172" y2="734.50" stroke="#666" stroke-width="1" stroke-dasharray="1,1"/>
<line x1="216" y1="734.50" x2="792" y2="734.50" stroke="#666" stroke-width="1" stroke-dasharray="1,1"/>
<line x1="9" y1="747.50" x2="172" y2="747.50" stroke="#666" stroke-width="1" stroke-dasharray="1,1"/>
<line x1="216" y1="747.50" x2="792" y2="747.50" stroke="#666" stroke-width="1" stroke-dasharray="1,1"/>
<path d="M13,632.5 H7.2 V760.5 H173.5 V632.5 H163" fill="none" stroke="#000" stroke-width="2"/>
<line x1="64.5" y1="632.5" x2="111" y2="632.5" stroke="#000" stroke-width="2"/>
<path d="M482.5,632.5 H214.6 V760.5 H792.6 V632.5 H524" fill="none" stroke="#000" stroke-width="2"/>
</svg>
<div class="band" style="left:20px;top:626.5px">VHF Lo</div>
<div class="band" style="left:119.5px;top:626.5px">VHF Hi</div>
<div class="band" style="left:492.5px;top:626.5px">UHF</div>
<div class="dbm" style="left:183px;top:626.5px">dBm</div>
<div class="dbl" style="top:639.5px">-10</div>
<div class="dbl" style="top:652.2px">-20</div>
<div class="dbl" style="top:665.0px">-30</div>
<div class="dbl" style="top:677.7px">-40</div>
<div class="dbl" style="top:690.5px">-50</div>
<div class="dbl" style="top:703.2px">-60</div>
<div class="dbl" style="top:716.0px">-70</div>
<div class="dbl" style="top:728.7px">-80</div>
<div class="dbl" style="top:741.5px">-90</div>
<div class="chn" style="left:177px;top:752px">Channel</div>
<div class="ch" style="left:-2.0px;top:754px"><span>2</span></div>
<div class="ch" style="left:19.2px;top:754px"><span>4</span></div>
<div class="ch" style="left:40.5px;top:754px"><span>5</span></div>
<div class="ch" style="left:50.0px;top:754px"><span>6</span></div>
<div class="ch" style="left:91.2px;top:754px"><span>7</span></div>
<div class="ch" style="left:112.0px;top:754px"><span>9</span></div>
<div class="ch" style="left:132.9px;top:754px"><span>11</span></div>
<div class="ch" style="left:153.3px;top:754px"><span>13</span></div>
<div class="ch" style="left:204.8px;top:754px"><span>14</span></div>
<div class="ch" style="left:225.2px;top:754px"><span>16</span></div>
<div class="ch" style="left:256.1px;top:754px"><span>19</span></div>
<div class="ch" style="left:287.0px;top:754px"><span>22</span></div>
<div class="ch" style="left:317.9px;top:754px"><span>25</span></div>
<div class="ch" style="left:348.8px;top:754px"><span>28</span></div>
<div class="ch" style="left:379.7px;top:754px"><span>31</span></div>
<div class="ch" style="left:410.6px;top:754px"><span>34</span></div>
<div class="ch" style="left:441.5px;top:754px"><span>37</span></div>
<div class="ch" style="left:472.4px;top:754px"><span>40</span></div>
<div class="ch" style="left:503.3px;top:754px"><span>43</span></div>
<div class="ch" style="left:534.2px;top:754px"><span>46</span></div>
<div class="ch" style="left:565.1px;top:754px"><span>49</span></div>
<div class="ch" style="left:596.0px;top:754px"><span>52</span></div>
<div class="ch" style="left:626.9px;top:754px"><span>55</span></div>
<div class="ch" style="left:657.8px;top:754px"><span>58</span></div>
<div class="ch" style="left:688.7px;top:754px"><span>61</span></div>
<div class="ch" style="left:719.6px;top:754px"><span>64</span></div>
<div class="ch" style="left:750.5px;top:754px"><span>67</span></div>
<div class="ch" style="left:771.1px;top:754px"><span>69</span></div>
<div style="left:120.0px;top:730.6px;width:13px;height:6.8px;border-radius:3.4px;background:#f4f000"></div>
<div style="left:122.0px;top:732.3px;width:9px;height:3.4px;border-radius:1.2px;background:#0a56c8;box-shadow:0 0 0 0.5px #163c8a"></div>
<div class="vn" style="left:122.3px;top:730.0px">WWTV</div>
<div style="left:246.0px;top:707.2px;width:9px;height:3.4px;border-radius:1.2px;background:#0a56c8;box-shadow:0 0 0 0.5px #163c8a"></div>
<div class="vn" style="left:246.3px;top:704.9px">WCMV-DT</div>
<div style="left:369.6px;top:719.3px;width:9px;height:3.4px;border-radius:1.2px;background:#0a56c8;box-shadow:0 0 0 0.5px #163c8a"></div>
<div class="vn" style="left:369.9px;top:717.0px">WGTU</div>
<div style="left:400.5px;top:752.6px;width:9px;height:3.4px;border-radius:1.2px;background:#0a56c8;box-shadow:0 0 0 0.5px #163c8a"></div>
<div class="vn" style="left:400.8px;top:750.3px">WFQX-TV</div>
<div style="left:482.9px;top:681.7px;width:9px;height:3.4px;border-radius:1.2px;background:#0a56c8;box-shadow:0 0 0 0.5px #163c8a"></div>
<div class="vn" style="left:483.2px;top:679.4px">WWTV</div>
<div style="left:555.0px;top:712.5px;width:9px;height:3.4px;border-radius:1.2px;background:#0a56c8;box-shadow:0 0 0 0.5px #163c8a"></div>
<div class="vn" style="left:555.3px;top:710.2px">WPBN-TV</div>
</body></html>
